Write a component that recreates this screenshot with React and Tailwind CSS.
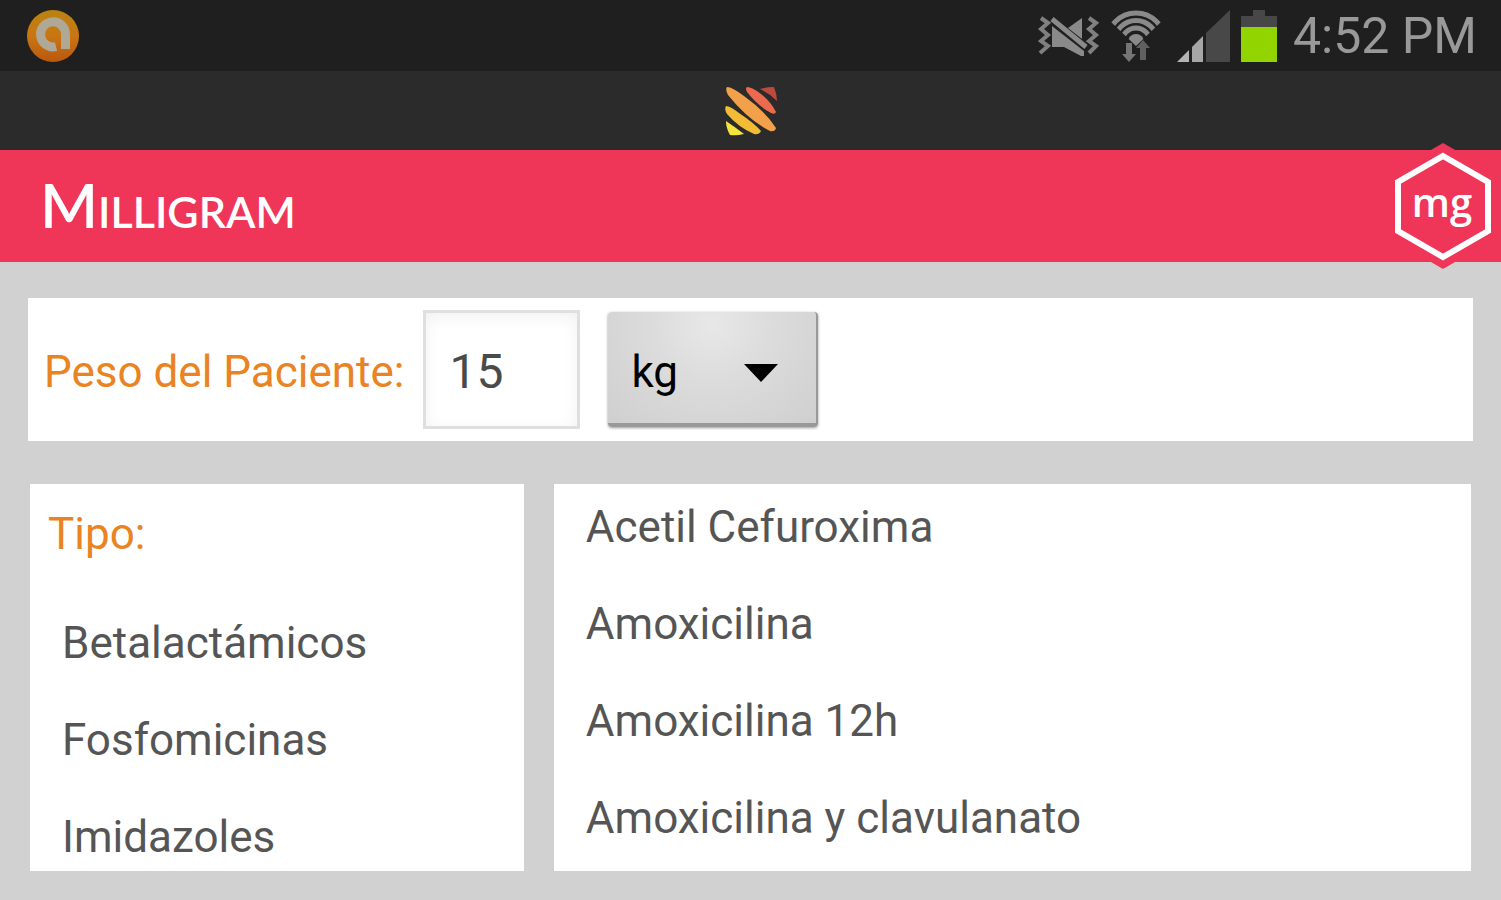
import { useState } from "react";

const types = ["Betalactámicos", "Fosfomicinas", "Imidazoles"];
const medicines = ["Acetil Cefuroxima", "Amoxicilina", "Amoxicilina 12h", "Amoxicilina y clavulanato"];

export default function App() {
  const [weight, setWeight] = useState("15");
  const [unit, setUnit] = useState("kg");

  return (
    <div className="flex min-h-screen flex-col bg-[#d1d1d1] font-['Roboto',sans-serif] text-[44px] leading-[52px] text-[#555555]">
      <StatusBar />
      <div className="flex h-[79px] items-center justify-center bg-[#2b2b2b]">
        <StripesLogo />
      </div>

      <header className="relative flex h-28 items-center bg-[#ef3659] pl-10">
        <h1 className="pb-1 font-['Lato',sans-serif] text-[62px] font-semibold leading-none text-white [font-variant-caps:small-caps]">
          Milligram
        </h1>
        <HexagonBadge />
      </header>

      <main className="flex flex-col gap-[43px] px-7 pb-7 pt-9">
        <section className="flex h-[143px] items-center bg-white pl-4">
          <label htmlFor="weight" className="pt-1 text-[#ea8322]">
            Peso del Paciente:
          </label>
          <input
            id="weight"
            type="text"
            inputMode="numeric"
            value={weight}
            onChange={(event) => setWeight(event.target.value)}
            className="ml-[18px] h-[119px] w-[157px] border-[3px] border-[#dfdfdf] bg-white px-6 pt-1 text-[48px] text-[#4a4a4a] shadow-[inset_0_4px_16px_rgba(0,0,0,0.06)] outline-none"
          />
          <div className="relative ml-7">
            <select
              aria-label="Unidad"
              value={unit}
              onChange={(event) => setUnit(event.target.value)}
              className="h-[115px] w-[210px] appearance-none rounded border-b-4 border-r-2 border-[#999999] bg-[radial-gradient(ellipse_at_50%_12%,#e8e8e8_0%,#dcdcdc_40%,#cfcfcf_100%)] pl-6 pt-2 text-black shadow-[0_1px_3px_rgba(0,0,0,0.4)] outline-none"
            >
              <option value="kg">kg</option>
              <option value="lb">lb</option>
            </select>
            <svg viewBox="0 0 34 18" className="pointer-events-none absolute right-10 top-[52px] h-[18px] w-[34px]" aria-hidden="true">
              <path d="M0 0h34L17 18z" />
            </svg>
          </div>
        </section>

        <div className="grid grid-cols-[35fr_65fr] gap-[30px] px-0.5">
          <section className="bg-white pb-2 pl-[18px] pt-6">
            <h2 className="text-[#ea8322]">Tipo:</h2>
            <OptionList items={types} className="mt-[57px] pl-3.5" />
          </section>
          <section className="bg-white pl-8 pt-[17px]">
            <OptionList items={medicines} />
          </section>
        </div>
      </main>
    </div>
  );
}

function OptionList({ items, className = "" }) {
  return (
    <ul className={`flex flex-col gap-[45px] ${className}`}>
      {items.map((item) => (
        <li key={item}>
          <button type="button" className="block w-full text-left">
            {item}
          </button>
        </li>
      ))}
    </ul>
  );
}

function StatusBar() {
  return (
    <div className="flex h-[71px] items-center justify-between bg-[#1f1f1f] pl-[26px] pr-6">
      <svg viewBox="0 0 54 54" className="h-[54px] w-[54px]" aria-hidden="true">
        <defs>
          <linearGradient id="orb" x1="0" y1="0" x2="0" y2="1">
            <stop offset="0" stopColor="#b98410" />
            <stop offset="0.5" stopColor="#c97612" />
            <stop offset="1" stopColor="#b9580e" />
          </linearGradient>
        </defs>
        <circle cx="27" cy="27" r="26" fill="url(#orb)" />
        <path d="M30 37.500A12.500 12.500 0 1 1 39.500 26v14" fill="none" stroke="#b0a896" strokeWidth="9" />
      </svg>

      <div className="flex items-center">
        <MuteIcon />
        <WifiIcon />
        <SignalIcon />
        <BatteryIcon />
        <span className="ml-4 text-[50px] text-[#999999]">4:52 PM</span>
      </div>
    </div>
  );
}

function MuteIcon() {
  return (
    <svg viewBox="0 0 62 42" className="h-[42px] w-[62px]" aria-hidden="true">
      <g fill="none" stroke="#808080" strokeWidth="4">
        <path d="M3 3l7 5-7 6 7 6-7 6 7 5-8 7" />
        <path d="M51 3l7 5-7 6 7 6-7 6 7 5-7 7" />
      </g>
      <path d="M14 11l32 25v5h-3L26 32H14z" fill="#8a8a8a" />
      <path d="M30 13L44 3v21z" fill="#8a8a8a" />
      <path d="M14 4l34 28" fill="none" stroke="#8a8a8a" strokeWidth="5" />
    </svg>
  );
}

function WifiIcon() {
  return (
    <svg viewBox="0 0 50 52" className="ml-[11px] h-[52px] w-[50px]" aria-hidden="true">
      <defs>
        <clipPath id="wedge">
          <path d="M25 36L-3 9V-4h56V9z" />
        </clipPath>
      </defs>
      <g clipPath="url(#wedge)" fill="none" stroke="#8a8a8a" strokeWidth="5">
        <circle cx="25" cy="32" r="29" />
        <circle cx="25" cy="32" r="21.500" />
        <circle cx="25" cy="32" r="14" />
        <circle cx="25" cy="32" r="8" fill="#8a8a8a" stroke="none" />
      </g>
      <path d="M15 33h6v11h4l-7 8-7-8h4z" fill="#757575" />
      <path d="M29 50V38h-4l7-8 7 8h-4v12z" fill="#606060" />
    </svg>
  );
}

function SignalIcon() {
  return (
    <svg viewBox="0 0 54 52" className="ml-4 h-[52px] w-[54px]" aria-hidden="true">
      <path d="M0 52l12-12v12z" fill="#b4b4b4" />
      <path d="M15 52V37l11-11v26z" fill="#a6a6a6" />
      <path d="M29 52V23L53 0v52z" fill="#484848" />
    </svg>
  );
}

function BatteryIcon() {
  return (
    <svg viewBox="0 0 36 52" className="ml-2.5 h-[52px] w-[36px]" aria-hidden="true">
      <path d="M0 17V6h12V0h12v6h12v11z" fill="#474747" />
      <path d="M0 17h36v35H0z" fill="#92d400" />
    </svg>
  );
}

function StripesLogo() {
  return (
    <svg viewBox="0 0 54 50" className="h-[50px] w-[54px]" aria-hidden="true">
      <path d="M36 3Q43 1 50 1 53 8 53 15 45 7 36 3z" fill="#bd4a3c" />
      <path d="M23 1Q28 1 37 8 47 16 52 26 51 29 47 27 34 20 23 6 21 2 23 1z" fill="#ee6a4e" />
      <path d="M3 1Q8 1 20 10 42 26 52 42 51 46 46 45 24 34 4 9 1 3 3 1z" fill="#f2a04a" />
      <path d="M2 20Q6 20 15 27 30 37 37 45 35 49 30 48 14 41 3 28 0 23 2 20z" fill="#f2bc36" />
      <path d="M2 35Q11 41 20 48 12 50 6 49 2 42 2 35z" fill="#f6e43e" />
    </svg>
  );
}

function HexagonBadge() {
  return (
    <div className="absolute -top-[7px] right-0 flex h-[126px] w-[116px] items-center justify-center">
      <svg viewBox="0 0 116 126" className="absolute inset-0 h-full w-full" aria-hidden="true">
        <path d="M58 0l57 33v60l-57 33L1 93V33z" fill="#ef3659" />
        <path d="M58 13l45 26v49l-45 26-45-26V39z" fill="none" stroke="#fff" strokeWidth="6" />
      </svg>
      <span className="relative pb-2 pr-0.5 font-['Open_Sans',sans-serif] text-[40px] font-semibold leading-none text-white">mg</span>
    </div>
  );
}
